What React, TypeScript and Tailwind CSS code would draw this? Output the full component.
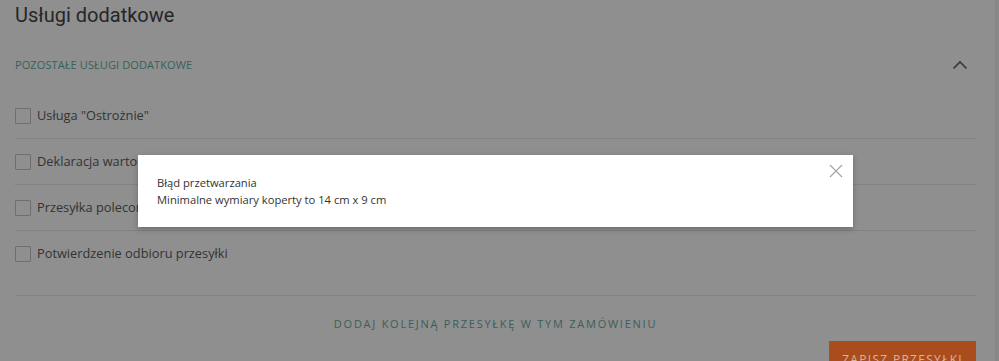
import React from 'react';

const rows = ['Usługa "Ostrożnie"', 'Deklaracja wartości', 'Przesyłka polecona', 'Potwierdzenie odbioru przesyłki'];

const Checkbox: React.FC<{ label: string; last?: boolean }> = ({ label, last }) => (
  <div className={`flex h-[46px] items-center gap-[6px] ${last ? '' : 'border-b border-[#818181]'}`}>
    <span className="h-[16px] w-[16px] rounded-[1px] border border-[#6e6e6e]" />
    <span className="text-[12.8px] text-[#333333]">{label}</span>
  </div>
);

export default function App() {
  return (
    <div className="relative flex h-[361px] w-full overflow-hidden bg-[#888888] font-['Open_Sans',sans-serif]">
      <div className="h-full w-[995px] shrink-0 bg-[#8f8f8f] pl-[15px] pr-[19px]">
        <h1 className="h-[30px] pt-[1px] font-['Roboto',sans-serif] text-[20px] leading-[28px] text-[#262626]">
          Usługi dodatkowe
        </h1>

        <div className="mt-[15px] flex h-[40px] items-center justify-between">
          <span className="text-[11px] tracking-[0.1px] text-[#36625a]">POZOSTAŁE USŁUGI DODATKOWE</span>
          <svg width="16" height="10" viewBox="0 0 16 10" className="mr-[8px]" fill="none">
            <path d="M1.5 8.5 L8 2 L14.5 8.5" stroke="#383838" strokeWidth="1.6" />
          </svg>
        </div>

        <div className="mt-[8px]">
          {rows.map((r, i) => (
            <Checkbox key={r} label={r} last={i === rows.length - 1} />
          ))}
        </div>

        <div className="mt-[18px] border-b border-[#848484]" />

        <div className="mt-[20px] flex h-[16px] items-center justify-center">
          <span className="text-[11px] tracking-[1.75px] text-[#3c5e5a]">DODAJ KOLEJNĄ PRZESYŁKĘ W TYM ZAMÓWIENIU</span>
        </div>

        <div className="mt-[9px] flex justify-end">
          <button className="h-[40px] bg-[#aa4d1d] px-[13px] pb-[12px] pt-[10px] text-[12px] leading-[18px] tracking-[1.3px] text-[#d6b4a2]">
            ZAPISZ PRZESYŁKI
          </button>
        </div>
      </div>

      <div className="absolute left-[138px] top-[155px] flex h-[72px] w-[715px] justify-between bg-white pl-[19px] pr-[10px] pt-[19px] shadow-[0_2px_6px_rgba(0,0,0,0.25)]">
        <div className="text-[11.2px] leading-[17px] text-[#333333]">
          <p>Błąd przetwarzania</p>
          <p>Minimalne wymiary koperty to 14 cm x 9 cm</p>
        </div>
        <button className="-mt-[10px] h-[14px] w-[14px]">
          <svg width="14" height="14" viewBox="0 0 14 14" fill="none">
            <path d="M1 1 L13 13 M13 1 L1 13" stroke="#a8a8a8" strokeWidth="1.3" />
          </svg>
        </button>
      </div>
    </div>
  );
}
